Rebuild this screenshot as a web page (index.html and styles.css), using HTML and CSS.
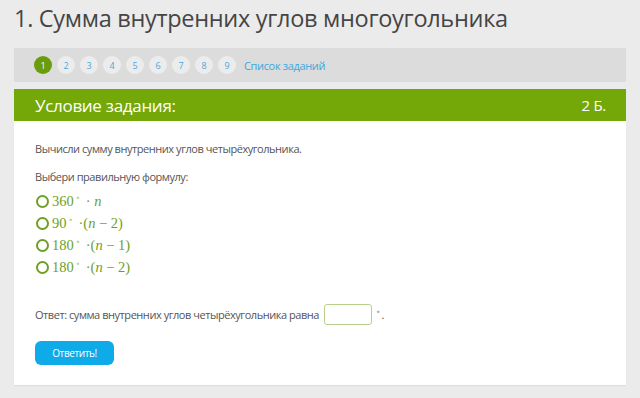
FILE: index.html
```html
<!DOCTYPE html>
<html lang="ru">
<head>
<meta charset="utf-8">
<title>Сумма внутренних углов многоугольника</title>
<link rel="stylesheet" href="styles.css">
</head>
<body>
<div class="page">
  <h1 class="title">1. Сумма внутренних углов многоугольника</h1>
  <nav class="nav">
    <span class="num active">1</span>
    <span class="num">2</span>
    <span class="num">3</span>
    <span class="num">4</span>
    <span class="num">5</span>
    <span class="num">6</span>
    <span class="num">7</span>
    <span class="num">8</span>
    <span class="num">9</span>
    <a class="list-link" href="#">Список заданий</a>
  </nav>
  <section class="card">
    <header class="card-head">
      <span class="card-title">Условие задания:</span>
      <span class="points">2 Б.</span>
    </header>
    <div class="card-body">
      <p class="text">Вычисли сумму внутренних углов четырёхугольника.</p>
      <p class="text choose">Выбери правильную формулу:</p>
      <ul class="options">
        <li class="option"><span class="radio"></span><span class="math">360<sup>∘</sup> · <i>n</i></span></li>
        <li class="option"><span class="radio"></span><span class="math">90<sup>∘</sup> ·(<i>n</i> − 2)</span></li>
        <li class="option"><span class="radio"></span><span class="math">180<sup>∘</sup> ·(<i>n</i> − 1)</span></li>
        <li class="option"><span class="radio"></span><span class="math">180<sup>∘</sup> ·(<i>n</i> − 2)</span></li>
      </ul>
      <div class="answer">
        <span class="text">Ответ: сумма внутренних углов четырёхугольника равна</span>
        <span class="input"></span>
        <span class="deg"><sup>∘</sup>.</span>
      </div>
      <button class="btn">Ответить!</button>
    </div>
  </section>
</div>
</body>
</html>
```

FILE: styles.css
```css
* { box-sizing: border-box; }
html, body { margin: 0; padding: 0; }
body {
  background: #ebebeb;
  font-family: "Open Sans", "Noto Sans", sans-serif;
  width: 640px;
  height: 398px;
  overflow: hidden;
}
.page {
  padding: 0 14px 0 14px;
}
.title {
  margin: 0;
  padding-top: 1px;
  height: 48px;
  font-weight: 400;
  font-size: 23.5px;
  line-height: 34px;
  color: #454545;
  letter-spacing: -0.3px;
}
.nav {
  height: 34px;
  background: #dcdcdc;
  display: flex;
  align-items: center;
  padding-left: 20px;
  gap: 5px;
}
.num {
  width: 18px;
  height: 18px;
  border-radius: 50%;
  background: #ececec;
  color: #4aa8dc;
  font-size: 9px;
  display: flex;
  align-items: center;
  justify-content: center;
  line-height: 1;
}
.num.active {
  background: #6a9c0c;
  color: #fff;
}
.list-link {
  margin-left: 3px;
  color: #3fa6dd;
  font-size: 11px;
  text-decoration: none;
  letter-spacing: -0.35px;
}
.card {
  margin-top: 7px;
  background: #fff;
  height: 296px;
  box-shadow: 0 1px 1px rgba(0,0,0,0.06);
}
.card-head {
  height: 32px;
  background: #74a708;
  display: flex;
  align-items: center;
  justify-content: space-between;
  padding: 0 20px 0 21px;
  color: #fff;
}
.card-title {
  font-size: 17px;
  letter-spacing: -0.3px;
}
.points {
  font-size: 15px;
  letter-spacing: -0.3px;
}
.card-body {
  padding: 20px 21px 0 21px;
}
.text {
  margin: 0;
  font-size: 11px;
  color: #555;
  letter-spacing: -0.45px;
  line-height: 16px;
}
.choose {
  margin-top: 12px;
}
.options {
  list-style: none;
  margin: 5px 0 0 0;
  padding: 0;
}
.option {
  display: flex;
  align-items: center;
  height: 22px;
}
.radio {
  width: 13px;
  height: 13px;
  border: 2px solid #6f9f23;
  border-radius: 50%;
  margin-left: 1px;
  margin-right: 3px;
}
.math {
  font-family: "Liberation Serif", "DejaVu Serif", serif;
  font-size: 14.5px;
  color: #6f9f23;
}
.math sup {
  font-family: "DejaVu Sans", sans-serif;
  font-size: 7px;
  vertical-align: 6px;
  margin: 0 2px 0 2px;
}
.math i { font-style: italic; }
.answer {
  margin-top: 26px;
  display: flex;
  align-items: center;
}
.input {
  width: 48px;
  height: 21px;
  border: 1.5px solid #b9cf90;
  border-radius: 3px;
  margin-left: 5px;
}
.deg {
  margin-left: 4px;
  font-size: 11px;
  color: #555;
}
.deg sup {
  font-family: "DejaVu Sans", sans-serif;
  font-size: 7px;
  vertical-align: 5px;
  margin-right: 1px;
}
.btn {
  margin-top: 16px;
  width: 79px;
  height: 24px;
  border: 0;
  border-radius: 6px;
  background: #0faae8;
  color: #fff;
  font-family: "Open Sans", sans-serif;
  font-size: 10px;
  letter-spacing: -0.4px;
  padding: 0;
}
```
